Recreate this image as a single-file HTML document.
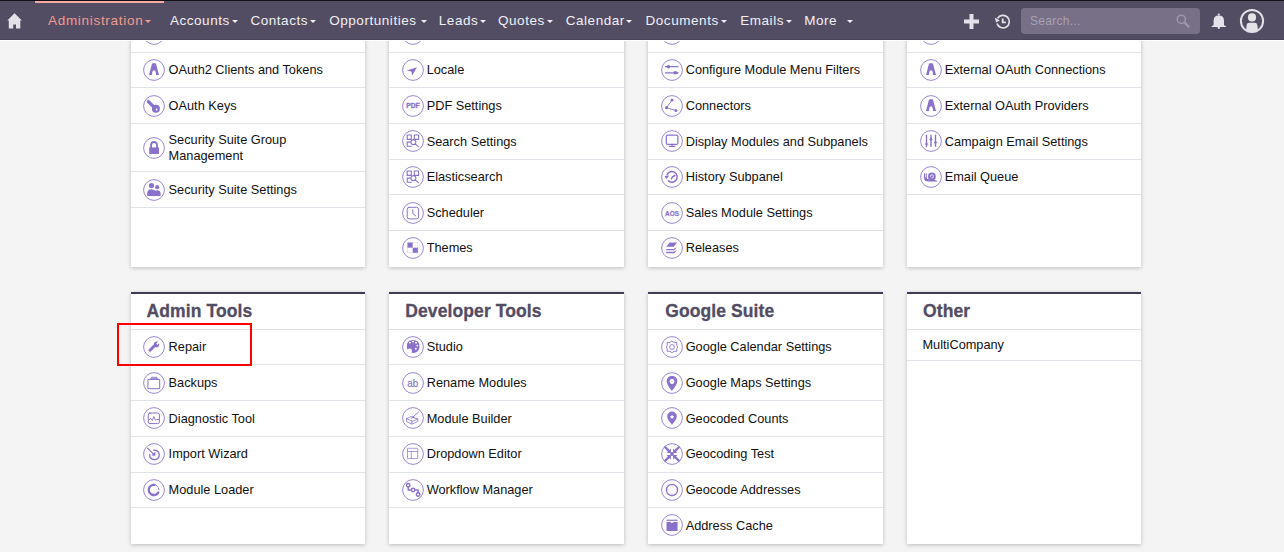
<!DOCTYPE html>
<html><head><meta charset="utf-8"><style>
html,body{margin:0;padding:0}
body{width:1284px;height:552px;overflow:hidden;position:relative;background:#f4f4f4;font-family:"Liberation Sans",sans-serif}
.abs{position:absolute}
.panel{position:absolute;background:#fff;box-shadow:0 1px 4px rgba(0,0,0,0.24)}
.p2{border-top:2px solid #423c55;box-sizing:border-box}
.sep{position:absolute;height:1px;background:#dfe3e8}
.ic{position:absolute}
.it{position:absolute;display:flex;align-items:center;font-size:12.75px;line-height:16.5px;color:#111;white-space:nowrap}
.hd{position:absolute;height:35px;display:flex;align-items:center;font-weight:bold;font-size:17.5px;letter-spacing:0.1px;-webkit-text-stroke:0.3px #534d64;color:#534d64;white-space:nowrap}
.red{position:absolute;left:117px;top:323px;width:131px;height:39px;border:2px solid #ff0000}
.nav{position:absolute;left:0;top:0;width:1284px;height:40px;background:#534d64;border-bottom:1px solid #fff}
.topline{position:absolute;left:0;top:0;width:1284px;height:1px;background:#141218}
.botline{position:absolute;left:0;top:39px;width:1284px;height:1px;background:#4a4459}
.active{position:absolute;left:35px;top:1px;width:129px;height:2px;background:#f6aaa0}
.nt{position:absolute;top:11px;height:20px;line-height:20px;font-size:13.5px;letter-spacing:0.55px;color:#f1f0f4;white-space:nowrap}
.nt.act{color:#f29a8e}
.caret{position:absolute;top:20px;width:0;height:0;border-left:3px solid transparent;border-right:3px solid transparent;border-top:3px solid #f1f0f4}
.caret.act{border-top-color:#f29a8e}
.sbox{position:absolute;left:1021px;top:8px;width:179px;height:26px;border-radius:4px;background:#777087}
.sph{position:absolute;left:1030px;top:8px;height:26px;line-height:26px;font-size:12px;color:#a6a1b4;letter-spacing:0.3px}
</style></head><body>
<div class="panel" style="left:131px;top:-20px;width:234px;height:287px"></div><svg class="ic" style="left:142.90px;top:23.30px" width="22" height="22" viewBox="0 0 22 22"><circle cx="11" cy="11" r="10.4" fill="none" stroke="#8a72cc" stroke-width="1" opacity="0.85"/></svg><div class="sep" style="left:131px;top:52px;width:234px"></div><svg class="ic" style="left:142.90px;top:58.80px" width="22" height="22" viewBox="0 0 22 22"><circle cx="11" cy="11" r="10.4" fill="none" stroke="#8a72cc" stroke-width="1" opacity="0.85"/><path d="M6 16 L8.9 4.9 Q9.1 4.3 9.7 4.3 H12.3 Q12.9 4.3 13.1 4.9 L16 16 H13.1 L12.7 12.9 Q12.5 11.3 11 11.3 Q9.5 11.3 9.3 12.9 L8.9 16 Z" fill="#8a72cc" /></svg><div class="it" style="left:168.6px;top:53.40px;height:34px">OAuth2 Clients and Tokens</div><div class="sep" style="left:131px;top:87px;width:234px"></div><svg class="ic" style="left:142.90px;top:94.80px" width="22" height="22" viewBox="0 0 22 22"><circle cx="11" cy="11" r="10.4" fill="none" stroke="#8a72cc" stroke-width="1" opacity="0.85"/><path d="M5.4 6.6 L11.2 12.4" fill="none" stroke="#8a72cc" stroke-width="3.3" stroke-linecap="round" stroke-linejoin="round" stroke-linecap="round"/><path d="M6.4 8.9 L8 8.6 L8.4 9.8 L9.6 9.8 L9.8 11 L7.6 10.6 Z" fill="#8a72cc" fill="#fff"/><circle cx="12.9" cy="13.8" r="4.0" fill="#8a72cc"/><circle cx="13.6" cy="14.5" r="0.9" fill="#fff"/></svg><div class="it" style="left:168.6px;top:89.40px;height:34px">OAuth Keys</div><div class="sep" style="left:131px;top:123px;width:234px"></div><svg class="ic" style="left:142.90px;top:136.80px" width="22" height="22" viewBox="0 0 22 22"><circle cx="11" cy="11" r="10.4" fill="none" stroke="#8a72cc" stroke-width="1" opacity="0.85"/><rect x="6.2" y="10.4" width="9.8" height="6.6" fill="#8a72cc"/><path d="M8.1 10.6 V8 A2.95 2.95 0 0 1 14 8 V10.6" fill="none" stroke="#8a72cc" stroke-width="1.9" stroke-linecap="round" stroke-linejoin="round" /></svg><div class="it" style="left:168.6px;top:128.40px;height:40px">Security Suite Group<br>Management</div><div class="sep" style="left:131px;top:171px;width:234px"></div><svg class="ic" style="left:142.90px;top:178.80px" width="22" height="22" viewBox="0 0 22 22"><circle cx="11" cy="11" r="10.4" fill="none" stroke="#8a72cc" stroke-width="1" opacity="0.85"/><circle cx="8.5" cy="6.6" r="2.6" fill="#8a72cc"/><circle cx="14.2" cy="8.2" r="2.1" fill="#8a72cc"/><path d="M4.2 17 V14.6 Q4.2 10.2 8.5 10.2 Q10.9 10.2 12 11.8 Q12.9 11.2 14.3 11.2 Q17.6 11.2 17.6 14.6 V17 Z" fill="#8a72cc" /></svg><div class="it" style="left:168.6px;top:173.40px;height:34px">Security Suite Settings</div><div class="sep" style="left:131px;top:207px;width:234px"></div><div class="panel" style="left:389px;top:-20px;width:235px;height:287px"></div><svg class="ic" style="left:401.90px;top:23.30px" width="22" height="22" viewBox="0 0 22 22"><circle cx="11" cy="11" r="10.4" fill="none" stroke="#8a72cc" stroke-width="1" opacity="0.85"/></svg><div class="sep" style="left:389px;top:52px;width:235px"></div><svg class="ic" style="left:401.90px;top:58.80px" width="22" height="22" viewBox="0 0 22 22"><circle cx="11" cy="11" r="10.4" fill="none" stroke="#8a72cc" stroke-width="1" opacity="0.85"/><path d="M15 8.2 L4.8 11.6 L9.4 12.4 L10.2 16.6 Z" fill="#8a72cc" /></svg><div class="it" style="left:426.7px;top:53.40px;height:34px">Locale</div><div class="sep" style="left:389px;top:87px;width:235px"></div><svg class="ic" style="left:401.90px;top:94.50px" width="22" height="22" viewBox="0 0 22 22"><circle cx="11" cy="11" r="10.4" fill="none" stroke="#8a72cc" stroke-width="1" opacity="0.85"/><text x="11" y="13.2" text-anchor="middle" font-family="Liberation Sans" font-weight="bold" font-size="7" stroke="#8a72cc" stroke-width="0.3" textLength="13.4" lengthAdjust="spacingAndGlyphs" fill="#8a72cc">PDF</text></svg><div class="it" style="left:426.7px;top:89.10px;height:34px">PDF Settings</div><div class="sep" style="left:389px;top:123px;width:235px"></div><svg class="ic" style="left:401.90px;top:130.20px" width="22" height="22" viewBox="0 0 22 22"><circle cx="11" cy="11" r="10.4" fill="none" stroke="#8a72cc" stroke-width="1" opacity="0.85"/><path d="M5.2 5 H9.3 V9.4 H5.2 Z M12.3 5 H16.6 V9.4 H12.3 Z M5.2 12.1 H8.5 M5.2 12.1 V16.3 H9.3" fill="none" stroke="#8a72cc" stroke-width="1.1" stroke-linecap="round" stroke-linejoin="round" /><path d="M11.4 9.6 A2.5 2.5 0 1 1 11.39 9.6 M13.2 13.8 L16.4 16.6" fill="none" stroke="#8a72cc" stroke-width="1.1" stroke-linecap="round" stroke-linejoin="round" /></svg><div class="it" style="left:426.7px;top:124.80px;height:34px">Search Settings</div><div class="sep" style="left:389px;top:159px;width:235px"></div><svg class="ic" style="left:401.90px;top:165.90px" width="22" height="22" viewBox="0 0 22 22"><circle cx="11" cy="11" r="10.4" fill="none" stroke="#8a72cc" stroke-width="1" opacity="0.85"/><path d="M5.2 5 H9.3 V9.4 H5.2 Z M12.3 5 H16.6 V9.4 H12.3 Z M5.2 12.1 H8.5 M5.2 12.1 V16.3 H9.3" fill="none" stroke="#8a72cc" stroke-width="1.1" stroke-linecap="round" stroke-linejoin="round" /><path d="M11.4 9.6 A2.5 2.5 0 1 1 11.39 9.6 M13.2 13.8 L16.4 16.6" fill="none" stroke="#8a72cc" stroke-width="1.1" stroke-linecap="round" stroke-linejoin="round" /></svg><div class="it" style="left:426.7px;top:160.50px;height:34px">Elasticsearch</div><div class="sep" style="left:389px;top:194px;width:235px"></div><svg class="ic" style="left:401.90px;top:201.60px" width="22" height="22" viewBox="0 0 22 22"><circle cx="11" cy="11" r="10.4" fill="none" stroke="#8a72cc" stroke-width="1" opacity="0.85"/><path d="M7.2 5.3 H14.6 Q16.6 5.3 16.6 7.3 V14.9 Q16.6 16.9 14.6 16.9 H7.2 Q5.2 16.9 5.2 14.9 V7.3 Q5.2 5.3 7.2 5.3 Z" fill="none" stroke="#8a72cc" stroke-width="1.0" stroke-linecap="round" stroke-linejoin="round" /><path d="M10.8 7.6 V11.6 L13.6 13.8" fill="none" stroke="#8a72cc" stroke-width="1.0" stroke-linecap="round" stroke-linejoin="round" /></svg><div class="it" style="left:426.7px;top:196.20px;height:34px">Scheduler</div><div class="sep" style="left:389px;top:230px;width:235px"></div><svg class="ic" style="left:401.90px;top:237.10px" width="22" height="22" viewBox="0 0 22 22"><circle cx="11" cy="11" r="10.4" fill="none" stroke="#8a72cc" stroke-width="1" opacity="0.85"/><rect x="5.6" y="5.6" width="10.2" height="10.2" fill="none" stroke="#8a72cc" stroke-width="0.6" opacity="0.35"/><rect x="5.5" y="5.6" width="5.2" height="5.1" fill="#8a72cc"/><rect x="10.7" y="10.7" width="5.2" height="5.1" fill="#8a72cc"/></svg><div class="it" style="left:426.7px;top:231.70px;height:34px">Themes</div><div class="panel" style="left:648px;top:-20px;width:235px;height:287px"></div><svg class="ic" style="left:660.90px;top:23.30px" width="22" height="22" viewBox="0 0 22 22"><circle cx="11" cy="11" r="10.4" fill="none" stroke="#8a72cc" stroke-width="1" opacity="0.85"/></svg><div class="sep" style="left:648px;top:52px;width:235px"></div><svg class="ic" style="left:660.90px;top:58.80px" width="22" height="22" viewBox="0 0 22 22"><circle cx="11" cy="11" r="10.4" fill="none" stroke="#8a72cc" stroke-width="1" opacity="0.85"/><path d="M4.4 7.7 H17 M4.4 13.8 H17" fill="none" stroke="#8a72cc" stroke-width="1.2" stroke-linecap="round" stroke-linejoin="round" /><circle cx="7.4" cy="7.7" r="1.8" fill="#8a72cc"/><circle cx="14.2" cy="13.8" r="1.8" fill="#8a72cc"/><path d="M17.6 13.8 L15.4 12.4 V15.2 Z" fill="#8a72cc" /></svg><div class="it" style="left:685.7px;top:53.40px;height:34px">Configure Module Menu Filters</div><div class="sep" style="left:648px;top:87px;width:235px"></div><svg class="ic" style="left:660.90px;top:94.50px" width="22" height="22" viewBox="0 0 22 22"><circle cx="11" cy="11" r="10.4" fill="none" stroke="#8a72cc" stroke-width="1" opacity="0.85"/><path d="M11 5 L5.6 12.7 L14.9 15.6" fill="none" stroke="#8a72cc" stroke-width="0.9" stroke-linecap="round" stroke-linejoin="round" /><circle cx="11" cy="5" r="1.5" fill="#8a72cc"/><circle cx="5.6" cy="12.7" r="1.6" fill="#8a72cc"/><circle cx="14.9" cy="15.6" r="1.5" fill="#8a72cc"/></svg><div class="it" style="left:685.7px;top:89.10px;height:34px">Connectors</div><div class="sep" style="left:648px;top:123px;width:235px"></div><svg class="ic" style="left:660.90px;top:130.20px" width="22" height="22" viewBox="0 0 22 22"><circle cx="11" cy="11" r="10.4" fill="none" stroke="#8a72cc" stroke-width="1" opacity="0.85"/><path d="M6.8 5.1 H15.4 Q16.9 5.1 16.9 6.6 V12.9 Q16.9 14.4 15.4 14.4 H6.8 Q5.3 14.4 5.3 12.9 V6.6 Q5.3 5.1 6.8 5.1 Z" fill="none" stroke="#8a72cc" stroke-width="1.25" stroke-linecap="round" stroke-linejoin="round" /><path d="M11.1 14.4 V16.2 M8.4 16.3 H13.9" fill="none" stroke="#8a72cc" stroke-width="1.2" stroke-linecap="round" stroke-linejoin="round" /></svg><div class="it" style="left:685.7px;top:124.80px;height:34px">Display Modules and Subpanels</div><div class="sep" style="left:648px;top:159px;width:235px"></div><svg class="ic" style="left:660.90px;top:165.90px" width="22" height="22" viewBox="0 0 22 22"><circle cx="11" cy="11" r="10.4" fill="none" stroke="#8a72cc" stroke-width="1" opacity="0.85"/><path d="M6.1 8.6 A5.3 5.3 0 1 1 7.4 14.9" fill="none" stroke="#8a72cc" stroke-width="1.5" stroke-linecap="round" stroke-linejoin="round" /><path d="M3.6 10 L8.2 9.4 L5.4 13.2 Z" fill="#8a72cc" /><path d="M10.4 12.8 Q10.9 10.6 13.9 9.5" fill="none" stroke="#8a72cc" stroke-width="1.5" stroke-linecap="round" stroke-linejoin="round" /></svg><div class="it" style="left:685.7px;top:160.50px;height:34px">History Subpanel</div><div class="sep" style="left:648px;top:194px;width:235px"></div><svg class="ic" style="left:660.90px;top:201.60px" width="22" height="22" viewBox="0 0 22 22"><circle cx="11" cy="11" r="10.4" fill="none" stroke="#8a72cc" stroke-width="1" opacity="0.85"/><text x="11" y="13.7" text-anchor="middle" font-family="Liberation Sans" font-weight="bold" font-size="6.7" stroke="#8a72cc" stroke-width="0.25" textLength="13.8" lengthAdjust="spacingAndGlyphs" fill="#8a72cc">AOS</text></svg><div class="it" style="left:685.7px;top:196.20px;height:34px">Sales Module Settings</div><div class="sep" style="left:648px;top:230px;width:235px"></div><svg class="ic" style="left:660.90px;top:237.10px" width="22" height="22" viewBox="0 0 22 22"><circle cx="11" cy="11" r="10.4" fill="none" stroke="#8a72cc" stroke-width="1" opacity="0.85"/><path d="M8.7 5.4 H16 L12.6 9.8 H5.2 Z M16 10.3 L13.2 13.3 H5.2 V12 H12.4 Z M16 13.1 L13.2 16.2 H5.2 V14.8 H12.6 Z" fill="#8a72cc" /></svg><div class="it" style="left:685.7px;top:231.70px;height:34px">Releases</div><div class="panel" style="left:907px;top:-20px;width:234px;height:287px"></div><svg class="ic" style="left:919.90px;top:23.30px" width="22" height="22" viewBox="0 0 22 22"><circle cx="11" cy="11" r="10.4" fill="none" stroke="#8a72cc" stroke-width="1" opacity="0.85"/></svg><div class="sep" style="left:907px;top:52px;width:234px"></div><svg class="ic" style="left:919.90px;top:58.80px" width="22" height="22" viewBox="0 0 22 22"><circle cx="11" cy="11" r="10.4" fill="none" stroke="#8a72cc" stroke-width="1" opacity="0.85"/><path d="M6 16 L8.9 4.9 Q9.1 4.3 9.7 4.3 H12.3 Q12.9 4.3 13.1 4.9 L16 16 H13.1 L12.7 12.9 Q12.5 11.3 11 11.3 Q9.5 11.3 9.3 12.9 L8.9 16 Z" fill="#8a72cc" /></svg><div class="it" style="left:944.7px;top:53.40px;height:34px">External OAuth Connections</div><div class="sep" style="left:907px;top:87px;width:234px"></div><svg class="ic" style="left:919.90px;top:94.50px" width="22" height="22" viewBox="0 0 22 22"><circle cx="11" cy="11" r="10.4" fill="none" stroke="#8a72cc" stroke-width="1" opacity="0.85"/><path d="M6 16 L8.9 4.9 Q9.1 4.3 9.7 4.3 H12.3 Q12.9 4.3 13.1 4.9 L16 16 H13.1 L12.7 12.9 Q12.5 11.3 11 11.3 Q9.5 11.3 9.3 12.9 L8.9 16 Z" fill="#8a72cc" /></svg><div class="it" style="left:944.7px;top:89.10px;height:34px">External OAuth Providers</div><div class="sep" style="left:907px;top:123px;width:234px"></div><svg class="ic" style="left:919.90px;top:130.20px" width="22" height="22" viewBox="0 0 22 22"><circle cx="11" cy="11" r="10.4" fill="none" stroke="#8a72cc" stroke-width="1" opacity="0.85"/><path d="M6.5 5.1 V16.3 M11 5.1 V16.3 M15.5 5.1 V16.3" fill="none" stroke="#8a72cc" stroke-width="1.4" stroke-linecap="round" stroke-linejoin="round" /><path d="M4.9 13.6 H8.1 L6.5 16.4 Z M9.2 9.3 L11 7.5 L12.8 9.3 L11 11.1 Z M13.8 12.4 L15.5 10.8 L17.2 12.4 L15.5 14 Z" fill="#8a72cc" /></svg><div class="it" style="left:944.7px;top:124.80px;height:34px">Campaign Email Settings</div><div class="sep" style="left:907px;top:159px;width:234px"></div><svg class="ic" style="left:919.90px;top:165.90px" width="22" height="22" viewBox="0 0 22 22"><circle cx="11" cy="11" r="10.4" fill="none" stroke="#8a72cc" stroke-width="1" opacity="0.85"/><circle cx="11.9" cy="10.4" r="3.9" fill="#8a72cc"/><path d="M11.9 10.4 m-1.6 0 a1.6 1.6 0 1 1 1.6 1.6" fill="none" stroke-width="0.8" stroke-linecap="round" stroke-linejoin="round" stroke="#fff"/><path d="M4 7.2 H5.2 V11.5 H6.2 V7.2 H7 V12.6 Q8.5 14 12 14 H15.2 L18 15.6 H8.6 Q4 15.6 4 12 Z" fill="#8a72cc" /></svg><div class="it" style="left:944.7px;top:160.50px;height:34px">Email Queue</div><div class="sep" style="left:907px;top:194px;width:234px"></div><div class="panel p2" style="left:131px;top:292px;width:234px;height:252px"></div><div class="hd" style="left:146.6px;top:293.8px">Admin Tools</div><div class="sep" style="left:131px;top:329px;width:234px"></div><svg class="ic" style="left:142.90px;top:335.90px" width="22" height="22" viewBox="0 0 22 22"><circle cx="11" cy="11" r="10.4" fill="none" stroke="#8a72cc" stroke-width="1" opacity="0.85"/><path d="M7 14.2 L12.2 9" fill="none" stroke="#8a72cc" stroke-width="3.0" stroke-linecap="round" stroke-linejoin="round" /><path d="M10.9 7.6 Q11.6 4.9 14.6 5.6 L15 5.8 L13.3 7.6 L14.3 9 L16.2 7.5 Q16.7 10.4 14.3 11.2 Q13 11.6 12 10.9 Z" fill="#8a72cc" /></svg><div class="it" style="left:168.6px;top:330.50px;height:34px">Repair</div><div class="sep" style="left:131px;top:364px;width:234px"></div><svg class="ic" style="left:142.90px;top:371.70px" width="22" height="22" viewBox="0 0 22 22"><circle cx="11" cy="11" r="10.4" fill="none" stroke="#8a72cc" stroke-width="1" opacity="0.85"/><path d="M5.3 7.4 H16.7 V16.7 H5.3 Z" fill="none" stroke="#8a72cc" stroke-width="1.0" stroke-linecap="round" stroke-linejoin="round" /><path d="M8.6 4.8 H13.9 L15.8 7.4 H6.4 Z" fill="#8a72cc" opacity="0.75"/></svg><div class="it" style="left:168.6px;top:366.30px;height:34px">Backups</div><div class="sep" style="left:131px;top:400px;width:234px"></div><svg class="ic" style="left:142.90px;top:407.40px" width="22" height="22" viewBox="0 0 22 22"><circle cx="11" cy="11" r="10.4" fill="none" stroke="#8a72cc" stroke-width="1" opacity="0.85"/><path d="M7 6 H14.6 Q16.4 6 16.4 7.8 V14.8 Q16.4 16.6 14.6 16.6 H7 Q5.3 16.6 5.3 14.8 V7.8 Q5.3 6 7 6 Z" fill="none" stroke="#8a72cc" stroke-width="1.0" stroke-linecap="round" stroke-linejoin="round" /><path d="M5.6 13.4 L7.8 11.4 L9.4 13.6 L10.8 9.5 L12.4 13.2 L13.4 12.6 L16.2 12.6" fill="none" stroke="#8a72cc" stroke-width="0.9" stroke-linecap="round" stroke-linejoin="round" /></svg><div class="it" style="left:168.6px;top:402.00px;height:34px">Diagnostic Tool</div><div class="sep" style="left:131px;top:436px;width:234px"></div><svg class="ic" style="left:142.90px;top:443.00px" width="22" height="22" viewBox="0 0 22 22"><circle cx="11" cy="11" r="10.4" fill="none" stroke="#8a72cc" stroke-width="1" opacity="0.85"/><path d="M4.5 5.2 L11 11.5" fill="none" stroke="#8a72cc" stroke-width="1.1" stroke-linecap="round" stroke-linejoin="round" /><path d="M10.6 7.2 A4.8 4.8 0 1 1 6.7 11.3" fill="none" stroke="#8a72cc" stroke-width="1.3" stroke-linecap="round" stroke-linejoin="round" /><path d="M12.5 8.6 L12.3 12.7 L8.4 12.5 Z" fill="#8a72cc" /></svg><div class="it" style="left:168.6px;top:437.60px;height:34px">Import Wizard</div><div class="sep" style="left:131px;top:472px;width:234px"></div><svg class="ic" style="left:142.90px;top:478.80px" width="22" height="22" viewBox="0 0 22 22"><circle cx="11" cy="11" r="10.4" fill="none" stroke="#8a72cc" stroke-width="1" opacity="0.85"/><path d="M15.2 13.6 A5.1 5.1 0 1 1 11.6 5.9" fill="none" stroke="#8a72cc" stroke-width="2.4" stroke-linecap="round" stroke-linejoin="round" stroke-linecap="butt"/><path d="M13.2 6.4 L13.9 6.9 M14.6 7.6 L15.1 8.3 M15.6 9.4 L15.9 10.6" fill="none" stroke="#8a72cc" stroke-width="1.0" stroke-linecap="round" stroke-linejoin="round" /></svg><div class="it" style="left:168.6px;top:473.40px;height:34px">Module Loader</div><div class="sep" style="left:131px;top:507px;width:234px"></div><div class="panel p2" style="left:389px;top:292px;width:235px;height:252px"></div><div class="hd" style="left:405.3px;top:293.8px">Developer Tools</div><div class="sep" style="left:389px;top:329px;width:235px"></div><svg class="ic" style="left:401.90px;top:335.90px" width="22" height="22" viewBox="0 0 22 22"><circle cx="11" cy="11" r="10.4" fill="none" stroke="#8a72cc" stroke-width="1" opacity="0.85"/><path d="M11 4 Q17.5 4 17.5 10.4 Q17.5 16.9 11 16.9 Q9.8 16.9 9.6 16.2 Q10.6 14.4 9.3 13 Q8 11.8 5.6 13.3 Q4.8 13 4.8 10.4 Q4.8 4 11 4 Z" fill="#8a72cc" /><circle cx="7.9" cy="6.6" r="0.95" fill="#fff"/><circle cx="11" cy="5.6" r="0.95" fill="#fff"/><circle cx="14" cy="6.7" r="0.95" fill="#fff"/><circle cx="15.3" cy="9.6" r="0.95" fill="#fff"/><circle cx="13.8" cy="12.8" r="0.95" fill="#fff"/></svg><div class="it" style="left:426.7px;top:330.50px;height:34px">Studio</div><div class="sep" style="left:389px;top:364px;width:235px"></div><svg class="ic" style="left:401.90px;top:371.70px" width="22" height="22" viewBox="0 0 22 22"><circle cx="11" cy="11" r="10.4" fill="none" stroke="#8a72cc" stroke-width="1" opacity="0.85"/><text x="10.7" y="14.6" text-anchor="middle" font-family="Liberation Sans" font-size="10.8" stroke="#8a72cc" stroke-width="0.2" textLength="11" lengthAdjust="spacingAndGlyphs" fill="#8a72cc">ab</text></svg><div class="it" style="left:426.7px;top:366.30px;height:34px">Rename Modules</div><div class="sep" style="left:389px;top:400px;width:235px"></div><svg class="ic" style="left:401.90px;top:407.40px" width="22" height="22" viewBox="0 0 22 22"><circle cx="11" cy="11" r="10.4" fill="none" stroke="#8a72cc" stroke-width="1" opacity="0.85"/><path d="M4.6 11.5 L9 9.6 L15.8 12 L11.2 14 Z M4.6 11.5 V14.6 L9.8 17 L15.8 14.6 V12 M9.8 17 V14" fill="none" stroke="#8a72cc" stroke-width="0.8" stroke-linecap="round" stroke-linejoin="round" /><path d="M9.3 11.4 L16.4 5.2 M10.6 9.4 L12.6 10.8" fill="none" stroke="#8a72cc" stroke-width="0.9" stroke-linecap="round" stroke-linejoin="round" /></svg><div class="it" style="left:426.7px;top:402.00px;height:34px">Module Builder</div><div class="sep" style="left:389px;top:436px;width:235px"></div><svg class="ic" style="left:401.90px;top:443.00px" width="22" height="22" viewBox="0 0 22 22"><circle cx="11" cy="11" r="10.4" fill="none" stroke="#8a72cc" stroke-width="1" opacity="0.85"/><path d="M5.9 5.3 H15.7 V15.5 H5.9 Z M5.9 8.5 H15.7 M9.3 8.5 V15.5" fill="none" stroke="#8a72cc" stroke-width="0.7" stroke-linecap="round" stroke-linejoin="round" /></svg><div class="it" style="left:426.7px;top:437.60px;height:34px">Dropdown Editor</div><div class="sep" style="left:389px;top:472px;width:235px"></div><svg class="ic" style="left:401.90px;top:478.80px" width="22" height="22" viewBox="0 0 22 22"><circle cx="11" cy="11" r="10.4" fill="none" stroke="#8a72cc" stroke-width="1" opacity="0.85"/><path d="M6.2 8 V11 H9.3 M12.9 11 H16.1 V13.8" fill="none" stroke="#8a72cc" stroke-width="1.4" stroke-linecap="round" stroke-linejoin="round" /><circle cx="6.2" cy="6.3" r="1.75" fill="none" stroke="#8a72cc" stroke-width="1.4"/><circle cx="11.1" cy="11" r="1.75" fill="none" stroke="#8a72cc" stroke-width="1.4"/><circle cx="16.1" cy="15.5" r="1.75" fill="none" stroke="#8a72cc" stroke-width="1.4"/></svg><div class="it" style="left:426.7px;top:473.40px;height:34px">Workflow Manager</div><div class="sep" style="left:389px;top:507px;width:235px"></div><div class="panel p2" style="left:648px;top:292px;width:235px;height:252px"></div><div class="hd" style="left:665.2px;top:293.8px">Google Suite</div><div class="sep" style="left:648px;top:329px;width:235px"></div><svg class="ic" style="left:660.90px;top:335.90px" width="22" height="22" viewBox="0 0 22 22"><circle cx="11" cy="11" r="10.4" fill="none" stroke="#8a72cc" stroke-width="1" opacity="0.85"/><path d="M11 5.3 L13.2 6.6 L15.8 6.6 L15.8 9.4 L16.8 11 L15.8 12.7 L15.8 15.3 L13.2 15.3 L11 16.6 L8.8 15.3 L6.2 15.3 L6.2 12.7 L5.3 11 L6.2 9.4 L6.2 6.6 L8.8 6.6 Z" fill="none" stroke="#8a72cc" stroke-width="0.9" stroke-linecap="round" stroke-linejoin="round" /><circle cx="11" cy="11" r="2.4" fill="none" stroke="#8a72cc" stroke-width="0.9"/></svg><div class="it" style="left:685.7px;top:330.50px;height:34px">Google Calendar Settings</div><div class="sep" style="left:648px;top:364px;width:235px"></div><svg class="ic" style="left:660.90px;top:371.70px" width="22" height="22" viewBox="0 0 22 22"><circle cx="11" cy="11" r="10.4" fill="none" stroke="#8a72cc" stroke-width="1" opacity="0.85"/><path d="M11 3.7 A5.35 5.35 0 0 1 16.35 9.05 Q16.35 12.8 10.8 18.9 Q5.65 12.8 5.65 9.05 A5.35 5.35 0 0 1 11 3.7 Z M11 7 A2.5 2.5 0 1 0 11.01 7 Z" fill="#8a72cc" fill-rule="evenodd"/></svg><div class="it" style="left:685.7px;top:366.30px;height:34px">Google Maps Settings</div><div class="sep" style="left:648px;top:400px;width:235px"></div><svg class="ic" style="left:660.90px;top:407.40px" width="22" height="22" viewBox="0 0 22 22"><circle cx="11" cy="11" r="10.4" fill="none" stroke="#8a72cc" stroke-width="1" opacity="0.85"/><path d="M11 4.5 A4.8 4.8 0 0 1 15.8 9.3 Q15.8 12.4 11 17.8 Q6.2 12.4 6.2 9.3 A4.8 4.8 0 0 1 11 4.5 Z" fill="#8a72cc" /><path d="M11 7.4 L11.7 9 L13.2 9.1 L12.1 10.2 L12.4 11.9 L11 11 L9.6 11.9 L9.9 10.2 L8.8 9.1 L10.3 9 Z" fill="#8a72cc" fill="#fff" style="fill:#fff"/></svg><div class="it" style="left:685.7px;top:402.00px;height:34px">Geocoded Counts</div><div class="sep" style="left:648px;top:436px;width:235px"></div><svg class="ic" style="left:660.90px;top:443.00px" width="22" height="22" viewBox="0 0 22 22"><circle cx="11" cy="11" r="10.4" fill="none" stroke="#8a72cc" stroke-width="1" opacity="0.85"/><path d="M4.2 4.2 L8.6 8.6 M17.8 4.2 L13.4 8.6 M4.2 17.8 L8.6 13.4 M17.8 17.8 L13.4 13.4" fill="none" stroke="#8a72cc" stroke-width="2.3" stroke-linecap="round" stroke-linejoin="round" stroke-linecap="butt"/><path d="M9.9 9.9 H5.6 L9.9 5.6 Z M12.1 9.9 H16.4 L12.1 5.6 Z M9.9 12.1 H5.6 L9.9 16.4 Z M12.1 12.1 H16.4 L12.1 16.4 Z" fill="#8a72cc" /><circle cx="11" cy="11" r="1.9" fill="#8a72cc"/></svg><div class="it" style="left:685.7px;top:437.60px;height:34px">Geocoding Test</div><div class="sep" style="left:648px;top:472px;width:235px"></div><svg class="ic" style="left:660.90px;top:478.80px" width="22" height="22" viewBox="0 0 22 22"><circle cx="11" cy="11" r="10.4" fill="none" stroke="#8a72cc" stroke-width="1" opacity="0.85"/><circle cx="11" cy="11" r="5.6" fill="none" stroke="#8a72cc" stroke-width="1.3"/><path d="M11 6.2 V7.4 M11 14.6 V15.8 M6.2 11 H7.4 M14.6 11 H15.8" fill="none" stroke="#8a72cc" stroke-width="0.8" stroke-linecap="round" stroke-linejoin="round" opacity="0.45"/></svg><div class="it" style="left:685.7px;top:473.40px;height:34px">Geocode Addresses</div><div class="sep" style="left:648px;top:507px;width:235px"></div><svg class="ic" style="left:660.90px;top:514.40px" width="22" height="22" viewBox="0 0 22 22"><circle cx="11" cy="11" r="10.4" fill="none" stroke="#8a72cc" stroke-width="1" opacity="0.85"/><path d="M5.5 5.6 H16.6 V7.1 H5.5 Z" fill="#8a72cc" opacity="0.85"/><path d="M5.5 8.1 H9.4 Q11 9.9 12.6 8.1 H16.6 V17 H5.5 Z" fill="#8a72cc" /></svg><div class="it" style="left:685.7px;top:509.00px;height:34px">Address Cache</div><div class="panel p2" style="left:907px;top:292px;width:234px;height:252px"></div><div class="hd" style="left:923px;top:293.8px">Other</div><div class="sep" style="left:907px;top:329px;width:234px"></div><div class="it" style="left:922.5px;top:328.1px;height:34px">MultiCompany</div><div class="sep" style="left:907px;top:360px;width:234px"></div><div class="red"></div>
<div class="nav"><div class="topline"></div><div class="botline"></div><div class="active"></div><svg class="abs" width="16" height="17" viewBox="0 0 16 17" style="left:7px;top:12.5px"><path d="M7.56 0.3 L0.3 7.5 H1.8 V15.6 H6.2 V11.5 H9 V15.6 H13.3 V7.5 H14.9 Z" fill="#e4e1e8"/></svg><div class="nt act" style="left:48.0px;letter-spacing:0.7px">Administration</div><div class="caret act" style="left:145px"></div><div class="nt" style="left:169.9px">Accounts</div><div class="caret" style="left:232px"></div><div class="nt" style="left:250.4px">Contacts</div><div class="caret" style="left:310px"></div><div class="nt" style="left:329.2px">Opportunities</div><div class="caret" style="left:421px"></div><div class="nt" style="left:438.8px">Leads</div><div class="caret" style="left:480px"></div><div class="nt" style="left:498.0px">Quotes</div><div class="caret" style="left:547px"></div><div class="nt" style="left:565.7px">Calendar</div><div class="caret" style="left:626px"></div><div class="nt" style="left:645.5px">Documents</div><div class="caret" style="left:720.5px"></div><div class="nt" style="left:740.2px">Emails</div><div class="caret" style="left:785.5px"></div><div class="nt" style="left:804.2px">More</div><div class="caret" style="left:847px"></div><svg class="abs" style="left:963px;top:13px" width="17" height="17" viewBox="0 0 17 17"><path d="M8.5 1 V16 M1 8.5 H16" stroke="#e4e1e8" stroke-width="4"/></svg><svg class="abs" style="left:993px;top:13px" width="18" height="18" viewBox="0 0 18 18"><path d="M4 10.6 A6.3 6.3 0 1 0 4.6 5.4" fill="none" stroke="#e4e1e8" stroke-width="1.7"/><path d="M1.8 4.6 L6.8 7.4 L3.1 9.4 Z" fill="#e4e1e8"/><path d="M9.7 5.6 V9.4 H12.9" fill="none" stroke="#e4e1e8" stroke-width="1.8"/></svg><div class="sbox"></div><div class="sph">Search...</div><svg class="abs" style="left:1176px;top:14px" width="14" height="14" viewBox="0 0 14 14"><circle cx="5.3" cy="5.3" r="4.1" fill="none" stroke="#9d97ab" stroke-width="1.5"/><path d="M8.4 8.4 L12.6 12.6" stroke="#9d97ab" stroke-width="2.2" stroke-linecap="round"/></svg><svg class="abs" style="left:1210px;top:13px" width="17" height="17" viewBox="0 0 17 17"><circle cx="8.8" cy="1.6" r="1.1" fill="#e4e1e8"/><path d="M3.6 12.2 V7.6 Q3.6 2.4 8.8 2.4 Q14 2.4 14 7.6 V12.2 Q15.3 12.6 16 13.2 Q16.3 14 15.6 14.1 H2 Q1.3 14 1.6 13.2 Q2.3 12.6 3.6 12.2 Z M7.5 14 H10.1 Q10.1 15.9 8.8 15.9 Q7.5 15.9 7.5 14 Z" fill="#e4e1e8"/></svg><svg class="abs" style="left:1239px;top:8px" width="26" height="26" viewBox="0 0 26 26"><defs><clipPath id="uc"><circle cx="13" cy="13" r="10.6"/></clipPath></defs><circle cx="13" cy="13" r="11.1" fill="none" stroke="#e4e1e8" stroke-width="2"/><circle cx="13" cy="9.4" r="4.1" fill="#e4e1e8"/><path d="M6.8 26 L7.6 17 Q8 14.8 10.4 14.8 H15.6 Q18 14.8 18.4 17 L19.2 26 Z" fill="#e4e1e8" clip-path="url(#uc)"/></svg></div>
</body></html>
